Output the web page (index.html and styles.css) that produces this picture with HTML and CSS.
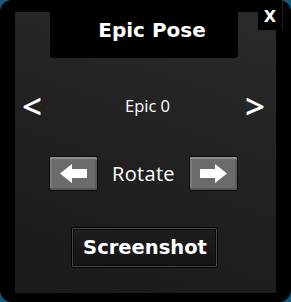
FILE: index.html
```html
<!DOCTYPE html>
<html>
<head>
<meta charset="utf-8">
<link rel="stylesheet" href="styles.css">
</head>
<body>
<div class="window">
  <div class="panel">
    <div class="tab"><span class="title">Epic Pose</span></div>
    <div class="nav">
      <span class="chev">&lt;</span>
      <span class="pose">Epic 0</span>
      <span class="chev">&gt;</span>
    </div>
    <div class="rotate">
      <button class="abtn" aria-label="Rotate left">
        <svg width="27" height="19" viewBox="0 0 27 19"><path d="M0 9.5 L12 0 L12 5 L27 5 L27 14 L12 14 L12 19 Z" fill="#fff"/></svg>
      </button>
      <span class="rlabel">Rotate</span>
      <button class="abtn" aria-label="Rotate right">
        <svg width="27" height="19" viewBox="0 0 27 19"><path d="M27 9.5 L15 0 L15 5 L0 5 L0 14 L15 14 L15 19 Z" fill="#fff"/></svg>
      </button>
    </div>
    <button class="shot">Screenshot</button>
  </div>
  <div class="close">X</div>
</div>
</body>
</html>
```

FILE: styles.css
```css
html, body {
  margin: 0;
  padding: 0;
}
body {
  background: #115a7c;
  font-family: "Open Sans", "Noto Sans", sans-serif;
  color: #fff;
}
.window {
  position: relative;
  width: 291px;
  height: 302px;
  background: #000;
  border-radius: 12px;
  display: flex;
  flex-direction: column;
  box-sizing: border-box;
  padding: 12px 15px 9px;
}
.panel {
  flex: 1;
  background: linear-gradient(200deg, #2b2b2b 0%, #222 45%, #1a1a1a 100%);
  display: flex;
  flex-direction: column;
  align-items: center;
}
.tab {
  align-self: flex-start;
  margin-left: 35px;
  width: 188px;
  height: 46px;
  background: #000;
  border-radius: 0 0 4px 4px;
  display: flex;
  justify-content: center;
  box-sizing: border-box;
  padding: 6px 0 0 16px;
}
.title {
  font-family: "DejaVu Sans", sans-serif;
  font-weight: 700;
  font-size: 20px;
  line-height: 24px;
}
.nav {
  align-self: stretch;
  margin-top: 33px;
  height: 30px;
  display: flex;
  align-items: center;
  justify-content: space-between;
  padding: 0 11px 0 7px;
}
.chev {
  font-size: 35px;
  font-weight: 600;
  line-height: 30px;
}
.pose {
  font-size: 16.5px;
  line-height: 22px;
  margin-left: 8px;
}
.rotate {
  margin-top: 35px;
  display: flex;
  align-items: center;
  gap: 14px;
  margin-left: -4px;
}
.abtn {
  width: 49px;
  height: 35px;
  padding: 0;
  margin: 0;
  background: #6b6b6b;
  border: 1px solid #0c0c0c;
  border-radius: 2px;
  box-shadow: inset 0 2px 0 #8e8e8e, inset 0 -2px 0 #555, inset 2px 0 0 #7a7a7a, inset -2px 0 0 #5c5c5c;
  display: flex;
  align-items: center;
  justify-content: center;
}
.rlabel {
  font-size: 20px;
  line-height: 26px;
  letter-spacing: 0.3px;
}
.shot {
  margin-top: 36px;
  margin-left: -3px;
  width: 147px;
  height: 41px;
  padding: 0 0 0 2px;
  background: linear-gradient(180deg, #1e1e1e, #141414);
  border: 1px solid #000;
  border-radius: 2px;
  box-shadow: inset 0 0 0 1px #474747, inset 0 0 0 2px #0c0c0c;
  color: #fff;
  font-family: "DejaVu Sans", sans-serif;
  font-weight: 700;
  font-size: 19.5px;
}
.close {
  position: absolute;
  top: 0;
  left: 258px;
  width: 25px;
  height: 30px;
  background: #000;
  border-right: 1px solid #222;
  box-sizing: border-box;
  font-family: "DejaVu Sans", sans-serif;
  font-weight: 700;
  font-size: 16px;
  line-height: 30px;
  text-align: center;
  padding-top: 2px;
}
```
